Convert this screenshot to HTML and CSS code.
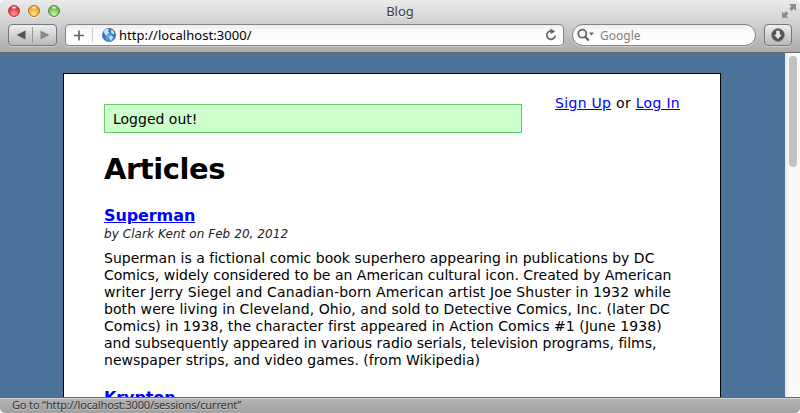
FILE: index.html
```html
<!DOCTYPE html>
<html lang="en">
<head>
<meta charset="utf-8">
<title>Blog</title>
<link rel="stylesheet" href="styles.css">
</head>
<body>
<div class="window">
  <header class="chrome">
    <div class="titlebar">
      <div class="lights"><i class="light red"></i><i class="light amber"></i><i class="light green"></i></div>
      <span class="title">Blog</span>
      <svg class="expand" width="16" height="16" viewBox="0 0 16 16"><g fill="#8b8b8b"><path d="M8 1h7v7l-2.300-2.300-2.200 2.200-2.300-2.300 2.200-2.200z"/><path d="M1 8.500l2 2 2.200-2.200 2.200 2.200L5.200 12.700l2 2H1z"/></g></svg>
    </div>
    <div class="toolbar">
      <div class="nav">
        <svg width="47" height="20" viewBox="0 0 47 20"><path d="M16.500 5.500v9l-9-4.500z" fill="#555"/><path d="M23.500 2v16" stroke="#999"/><path d="M31.500 5.500v9l9-4.500z" fill="#8b8b8b"/></svg>
      </div>
      <div class="address">
        <svg class="plus" width="34" height="20" viewBox="0 0 34 20"><path d="M8 10.500h10M13 5.500v10" stroke="#666" stroke-width="1.700"/><path d="M26.500 3v14" stroke="#ccc"/></svg>
        <svg class="globe" width="16" height="16" viewBox="0 0 16 16"><defs><radialGradient id="g" cy=".65"><stop offset="0" stop-color="#55b8f4"/><stop offset=".65" stop-color="#367fce"/><stop offset="1" stop-color="#416fa9"/></radialGradient></defs><circle cx="8" cy="8" r="7" fill="url(#g)"/><path d="M3 3.500l3-1.700 2 .7-1 2 1.500 1-2 1.500.5 1.500L4.500 8 2.500 5zM8 8.500l3.500.6L12 11l-2 3-1.400-2.600zM10 3l2 .3 1.500 2.600-1.400 1.600-2-1.900z" fill="#c4e4fa"/></svg>
        <span class="url">http://localhost:3000/</span>
        <svg class="reload" width="14" height="14" viewBox="0 0 14 14"><path d="M9.500 3.700A4.200 4.200 0 1 0 11.200 7.500" fill="none" stroke="#666" stroke-width="1.700"/><path d="M6.500 5.900V.6l4.700 2.900z" fill="#666"/></svg>
      </div>
      <div class="search">
        <svg width="20" height="16" viewBox="0 0 20 16"><circle cx="5.300" cy="6.700" r="4" fill="none" stroke="#666" stroke-width="1.800"/><path d="M8 9.500l3.700 4" stroke="#666" stroke-width="2.200"/><path d="M12 5.500h5l-2.500 3z" fill="#666"/></svg>
        <span class="hint">Google</span>
      </div>
      <div class="download">
        <svg width="16" height="16" viewBox="0 0 16 16"><circle cx="8" cy="8" r="6.200" fill="#505050" stroke="#666"/><path d="M6.200 3.800h3.600v4h2.300L8 12 3.900 7.800h2.300z" fill="#e6e6e6"/></svg>
      </div>
    </div>
  </header>
  <main class="viewport">
    <div class="page">
      <div class="user-nav"><a>Sign Up</a> or <a>Log In</a></div>
      <div class="flash">Logged out!</div>
      <h1>Articles</h1>
      <h2><a>Superman</a></h2>
      <div class="byline">by Clark Kent on Feb 20, 2012</div>
      <p>
        <span class="l1">Superman is a fictional comic book superhero appearing in publications by DC</span>
        <span class="l2">Comics, widely considered to be an American cultural icon. Created by American</span>
        <span class="l3">writer Jerry Siegel and Canadian-born American artist Joe Shuster in 1932 while</span>
        <span class="l4">both were living in Cleveland, Ohio, and sold to Detective Comics, Inc. (later DC</span>
        <span class="l5">Comics) in 1938, the character first appeared in Action Comics #1 (June 1938)</span>
        <span class="l6">and subsequently appeared in various radio serials, television programs, films,</span>
        <span class="l7">newspaper strips, and video games. (from Wikipedia)</span>
      </p>
      <h2><a>Krypton</a></h2>
    </div>
    <div class="scrollbar"><div class="thumb"></div></div>
  </main>
  <footer class="status"><span>Go to “http://localhost:3000/sessions/current”</span></footer>
</div>
</body>
</html>
```

FILE: styles.css
```css
* { box-sizing: border-box; }
body { margin: 0; background: #fff; font-family: "DejaVu Sans", sans-serif; }
svg { display: block; flex: none; }
.window { width: 800px; height: 413px; display: flex; flex-direction: column; overflow: hidden; border-radius: 5px; }
.chrome { height: 53px; flex: none; background: linear-gradient(#ebebeb, #d0d0d0 45%, #acacac); border-bottom: 1px solid #686868; font-family: "Noto Sans", sans-serif; }
.titlebar { height: 24px; display: grid; grid-template-columns: 1fr auto 1fr; padding: 0 3px 0 8px; }
.lights { display: flex; gap: 8px; padding-top: 5px; }
.light { width: 12px; height: 12px; border-radius: 50%; border: 1px solid; box-shadow: 0 1px 0 #f5f5f5; }
.red { border-color: #a13c3e; background: radial-gradient(ellipse 3px 2px at 50% 15%, #fff, transparent), radial-gradient(circle at 50% 80%, #ff9a9a, #e4383f 65%); }
.amber { border-color: #a66d25; background: radial-gradient(ellipse 3px 2px at 50% 15%, #fff, transparent), radial-gradient(circle at 50% 80%, #ffe783, #f0a52f 65%); }
.green { border-color: #4b8539; background: radial-gradient(ellipse 3px 2px at 50% 15%, #fff, transparent), radial-gradient(circle at 50% 80%, #c6f99e, #6abb4c 65%); }
.title { font-size: 13px; line-height: 23px; color: #3c3c3c; text-shadow: 0 1px #f3f3f3; margin-right: 5px; }
.expand { justify-self: end; margin-top: 3px; }
.toolbar { display: flex; padding: 0 8px; height: 22px; }
.nav, .download { height: 22px; border: 1px solid #777; border-radius: 4px; background: linear-gradient(#efefef, #b9b9b9); box-shadow: 0 1px #d0d0d0; }
.nav { width: 49px; }
.address, .search { display: flex; align-items: center; height: 22px; border: 1px solid #858585; background: linear-gradient(#eee, #fafafa 30%, #fff); box-shadow: 0 1px #d0d0d0; }
.address { width: 499px; margin-left: 8px; border-radius: 4px; padding-right: 5px; }
.globe { margin-left: 1px; }
.url { font-size: 13px; line-height: 20px; color: #000; margin-left: 2px; flex: 1; letter-spacing: .05px; }
.search { width: 184px; margin-left: 8px; border-radius: 11px; padding-left: 4px; }
.hint { font-size: 12px; color: #808080; margin-left: 3px; }
.download { width: 28px; margin-left: 8px; display: grid; place-items: center; }
.viewport { flex: 1; min-height: 0; display: flex; overflow: hidden; background: #4b7399; }
.page { width: 658px; height: 500px; flex: none; margin: 20px 64px 0 63px; border: 1px solid #000; background: #fff; padding: 30px 40px; font-size: 14px; line-height: 17px; color: #000; }
.user-nav { float: right; margin-top: -9px; white-space: nowrap; letter-spacing: .3px; }
a { color: #00f; text-decoration: underline; }
.flash { width: 418px; height: 29px; border: 1px solid #66cc66; background: #ccffcc; padding: 6px 8px; }
h1 { font-size: 29px; line-height: 36px; margin: 18px 0 0; letter-spacing: -.45px; }
h2 { font-size: 16px; line-height: 20px; margin: 19px 0 0; letter-spacing: -.1px; }
.byline { font-size: 12px; line-height: 15px; font-style: italic; color: #222; margin-top: 1px; letter-spacing: .07px; }
p { margin: 8px 0 0; }
p span { display: block; white-space: nowrap; }
.l1 { letter-spacing: .02px; }
.l3 { letter-spacing: .12px; }
.l4 { letter-spacing: .07px; }
.l5 { letter-spacing: .08px; }
.l6 { letter-spacing: -.01px; }
.l7 { letter-spacing: .03px; }
.scrollbar { width: 15px; background: linear-gradient(90deg, #e8e8e8, #fafafa 30%, #fafafa); padding: 3px 0 0 4px; }
.thumb { width: 8px; height: 111px; border-radius: 4px; background: #c1c1c1; }
.status { height: 16px; flex: none; border-top: 1px solid #686868; background: linear-gradient(#d5d5d5 1px, #b2b2b2 1px, #a2a2a2); padding-left: 12px; font: 11px/14px "Noto Sans", sans-serif; letter-spacing: -.15px; color: #333; text-shadow: 0 1px #c8c8c8; }
```
